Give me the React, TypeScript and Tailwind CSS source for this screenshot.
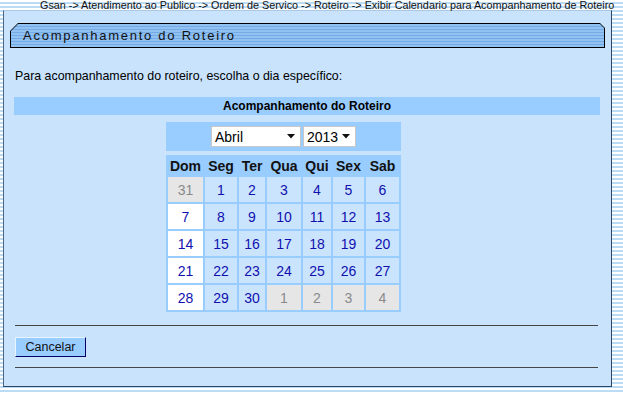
import React from "react";

const weeks: { d: number; other?: boolean }[][] = [
  [{ d: 31, other: true }, { d: 1 }, { d: 2 }, { d: 3 }, { d: 4 }, { d: 5 }, { d: 6 }],
  [{ d: 7 }, { d: 8 }, { d: 9 }, { d: 10 }, { d: 11 }, { d: 12 }, { d: 13 }],
  [{ d: 14 }, { d: 15 }, { d: 16 }, { d: 17 }, { d: 18 }, { d: 19 }, { d: 20 }],
  [{ d: 21 }, { d: 22 }, { d: 23 }, { d: 24 }, { d: 25 }, { d: 26 }, { d: 27 }],
  [{ d: 28 }, { d: 29 }, { d: 30 }, { d: 1, other: true }, { d: 2, other: true }, { d: 3, other: true }, { d: 4, other: true }],
];

const days = ["Dom", "Seg", "Ter", "Qua", "Qui", "Sex", "Sab"];
const widths = ["w-[35px]", "w-[32px]", "w-[26px]", "w-[34px]", "w-[28px]", "w-[31px]", "w-[33px]"];

function Arrow() {
  return (
    <svg width="8" height="5" viewBox="0 0 8 5" className="shrink-0">
      <path d="M0 0 H8 L4 4.5 Z" fill="#111" />
    </svg>
  );
}

export default function App() {
  return (
    <div className="w-[623px] h-[394px] overflow-hidden bg-[repeating-linear-gradient(to_bottom,#ffffff_0px,#ffffff_2px,#bcdcf5_2px,#bcdcf5_4px)] font-['Liberation_Sans',Arial,sans-serif] text-black">
      <div className="h-[10px] pl-[40px] text-[10.8px] leading-[11px] whitespace-nowrap text-[#111]">
        Gsan -&gt; Atendimento ao Publico -&gt; Ordem de Servico -&gt; Roteiro -&gt; Exibir Calendario para Acompanhamento de Roteiro
      </div>
      <div className="ml-[3px] w-[609px] h-[377px] bg-[#c9e3fc] border border-t-[#a9c9e6] border-l-[#4a6585] border-r-[#2b4566] border-b-[#2b4566] flex flex-col">
        {/* title bar */}
        <div className="mt-[12px] ml-[6px] w-[595px] h-[25px] bg-black [clip-path:polygon(8px_0,calc(100%-5px)_0,100%_5px,100%_100%,0_100%,0_8px)] p-[1px]">
          <div className="w-full h-full bg-[repeating-linear-gradient(to_bottom,#92c2f1_0px,#92c2f1_2px,#74aae6_2px,#74aae6_3px)] [clip-path:polygon(7px_0,calc(100%-4px)_0,100%_4px,100%_100%,0_100%,0_7px)] flex items-center pl-[12px] text-[13px] tracking-[1.75px] text-[#111]">
            Acompanhamento do Roteiro
          </div>
        </div>
        <div className="mt-[20px] ml-[11px] text-[12.4px] leading-[16px]">
          Para acompanhamento do roteiro, escolha o dia específico:
        </div>
        <div className="mt-[13px] ml-[10px] w-[586px] h-[18px] bg-[#99ccff] flex items-center justify-center text-[12px] font-bold">
          Acompanhamento do Roteiro
        </div>
        {/* calendar */}
        <div className="mt-[7px] ml-[162px] w-[235px] flex flex-col">
          <div className="h-[29px] bg-[#99ccff] flex items-center justify-center gap-[2px]">
            <div className="w-[90px] h-[21px] bg-white border border-[#c8c8c8] flex items-center justify-between pl-[3px] pr-[5px] text-[14px] leading-[16px]">
              <span>Abril</span>
              <Arrow />
            </div>
            <div className="w-[53px] h-[21px] bg-white border border-[#c8c8c8] flex items-center justify-between pl-[3px] pr-[5px] text-[14px] leading-[16px]">
              <span>2013</span>
              <Arrow />
            </div>
          </div>
          <table className="mt-[4px] bg-[#99ccff] border-separate border-spacing-[2px] text-[14px] leading-[16px]">
            <thead>
              <tr>
                {days.map((d, i) => (
                  <th key={d} className={`${widths[i]} h-[18px] p-0 font-bold text-center text-[#111] text-[14px] leading-[16px]`}>
                    {d}
                  </th>
                ))}
              </tr>
            </thead>
            <tbody>
              {weeks.map((w, wi) => (
                <tr key={wi}>
                  {w.map((c, ci) => (
                    <td
                      key={ci}
                      className={`h-[25px] p-0 text-center leading-[16px] ${
                        c.other
                          ? "bg-[#e6e6e6] text-[#8a8a8a]"
                          : ci === 0
                          ? "bg-white text-[#1010b0]"
                          : "bg-[#cbe4fd] text-[#1010b0]"
                      }`}
                    >
                      {c.d}
                    </td>
                  ))}
                </tr>
              ))}
            </tbody>
          </table>
        </div>
        <div className="mt-[13px] ml-[11px] w-[583px] h-0 border-t border-[#454545]" />
        <div className="mt-[11px] ml-[11px] flex">
          <button className="w-[71px] h-[20px] bg-[#99ccff] border border-t-[#e8f4ff] border-l-[#e8f4ff] border-r-[#000066] border-b-[#000066] text-[12.5px] leading-[16px] text-[#111] p-0">
            Cancelar
          </button>
        </div>
        <div className="mt-[10px] ml-[11px] w-[583px] h-0 border-t border-[#454545]" />
      </div>
    </div>
  );
}
